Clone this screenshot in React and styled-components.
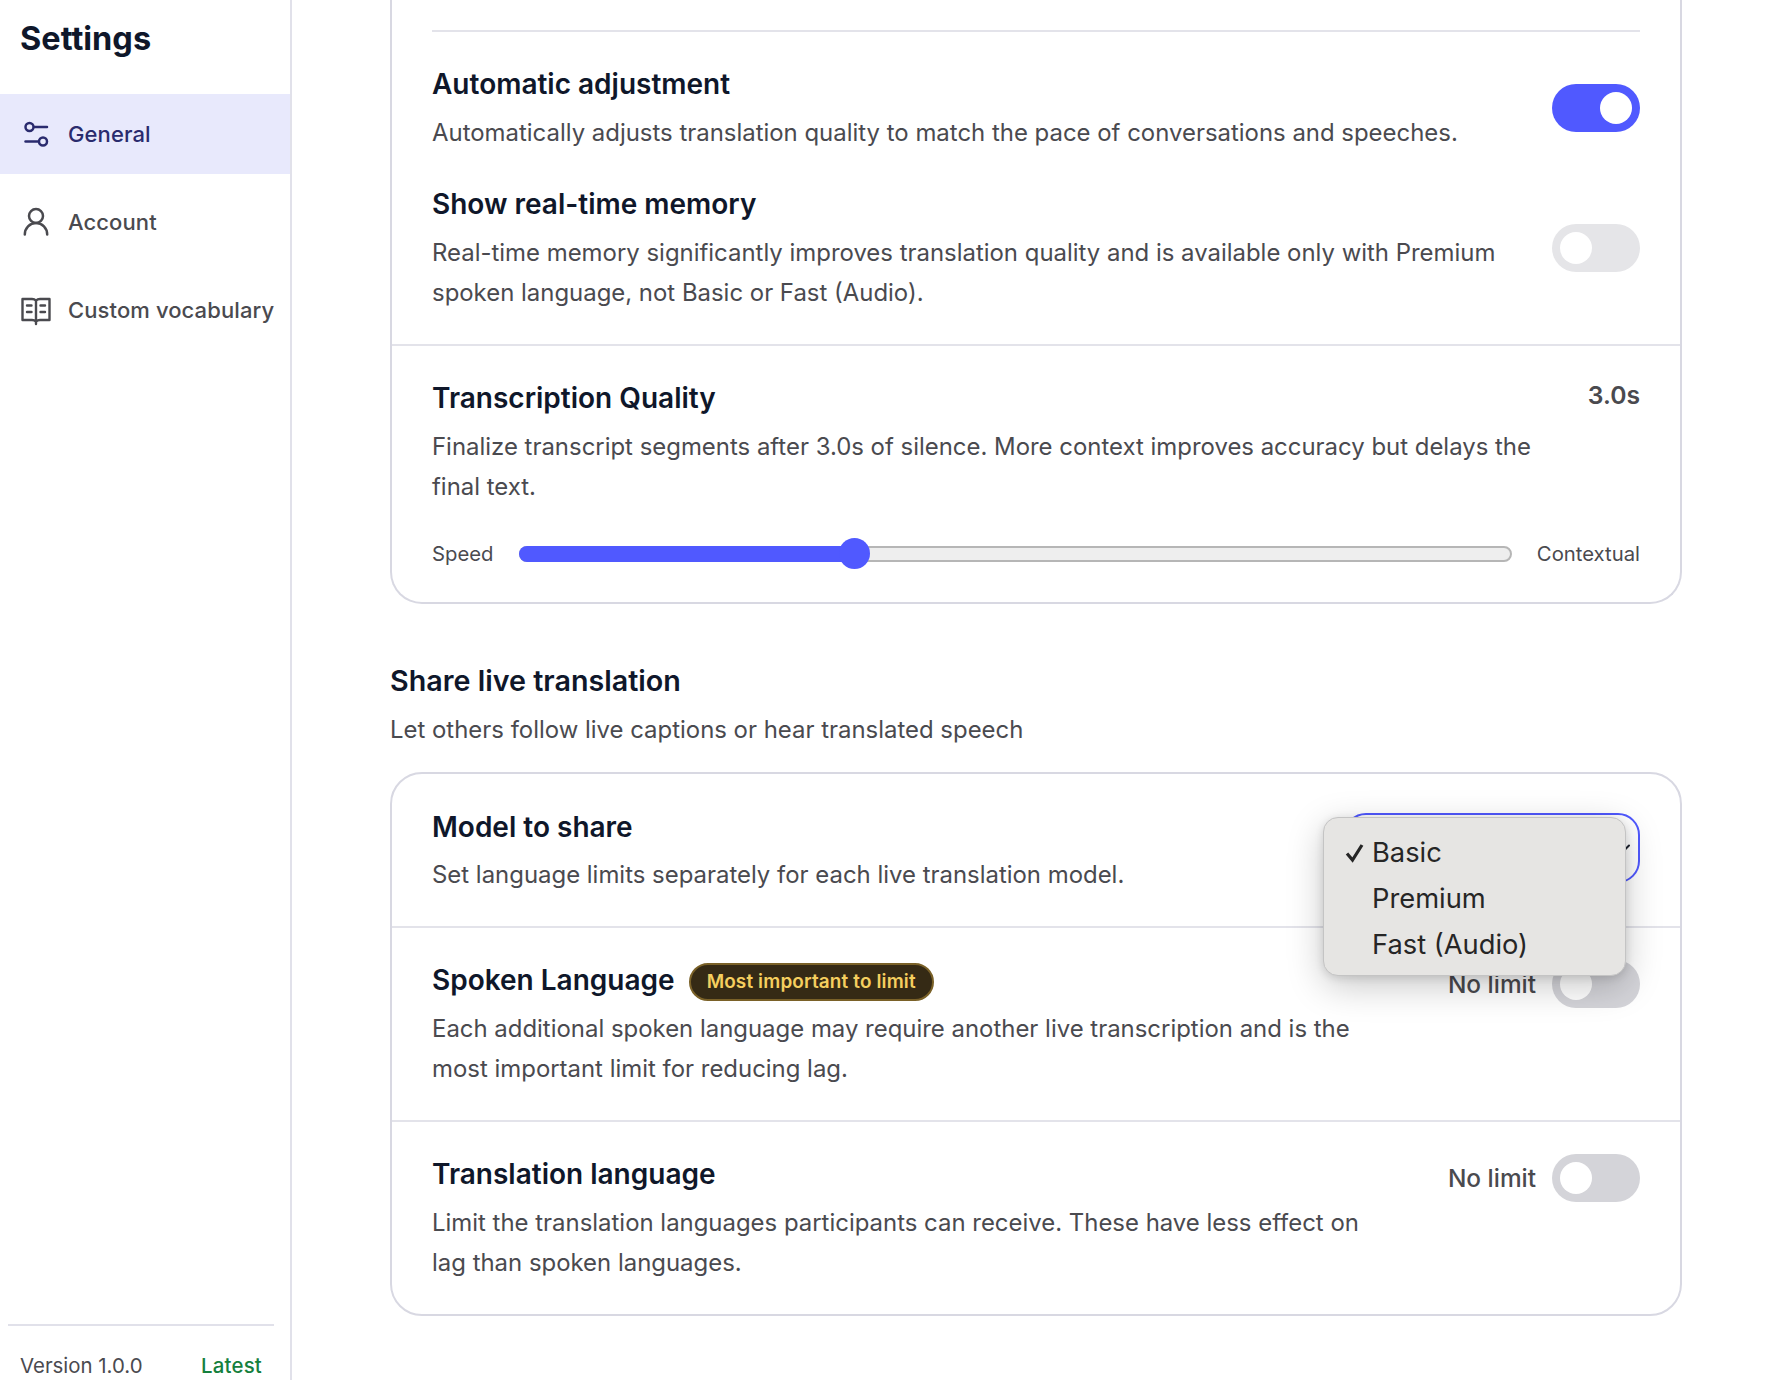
import React from "react";
import styled, { createGlobalStyle } from "styled-components";

const Global = createGlobalStyle`
  html, body { margin: 0; padding: 0; background: #fff; height: 100%; }
  body { font-family: Inter, "Liberation Sans", sans-serif; -webkit-font-smoothing: antialiased; }
`;
const Shell = styled.div`
  display: flex; width: 1778px; height: 1380px; overflow: hidden; background: #fff;
`;
const Sidebar = styled.aside`
  width: 290px; flex: none; border-right: 2px solid #e1e1ea; display: flex; flex-direction: column; height: 1380px; box-sizing: content-box;
`;
const Brand = styled.h1`
  margin: 0; padding: 19px 0 0 20px; height: 94px; box-sizing: border-box; font-size: 32.5px; line-height: 40px; font-weight: 700; color: #0f172a;
`;
const Nav = styled.nav`
  display: flex; flex-direction: column; gap: 8px; flex: 1;
`;
const NavItem = styled.div`
  height: 80px; display: flex; align-items: center; gap: 16px; padding-left: 20px;
  font-size: 22px; font-weight: 500; letter-spacing: 0.1px;
  color: ${p => (p.$active ? "#2a2b6e" : "#4a4a4f")};
  background: ${p => (p.$active ? "#e8e9fc" : "transparent")};
  svg { flex: none; width: 32px; height: 32px; }
`;
const VersionBar = styled.div`
  margin: 0 16px 0 8px; border-top: 2px solid #e1e1ea; height: 56px; box-sizing: border-box; padding: 24px 12px 0; display: flex; justify-content: space-between; align-items: center; font-size: 20.4px; color: #4a4a4f;
`;
const Latest = styled.span`
  color: #15803d; font-weight: 500; letter-spacing: 0.2px;
`;
const Main = styled.main`
  flex: 1; padding: 0 96px 0 98px; min-width: 0;
`;
const Card = styled.section`
  border: 2px solid #d8d8e2; border-radius: 32px; background: #fff;
  ${p => p.$clipped && "border-top: 0; border-top-left-radius: 0; border-top-right-radius: 0; padding-top: 30px;"}
`;
const TopRule = styled.div`
  height: 2px; margin: 0 40px; background: #e3e3ea;
`;
const Group = styled.div`
  padding: ${p => p.$pad || "33px 40px 31px"};
  & + & { border-top: 2px solid #e3e3ea; }
`;
const Row = styled.div`
  display: flex; justify-content: space-between; align-items: flex-start; gap: 32px;
  & + & { margin-top: 32px; }
`;
const Body = styled.div`
  flex: 1; min-width: 0;
`;
const Title = styled.h3`
  margin: 0 0 ${p => p.$after || "10px"}; font-size: 28px; line-height: 38px; font-weight: 600; color: #0f172a; display: flex; align-items: center; gap: 14px;
`;
const Desc = styled.p`
  margin: 0; font-size: 23.93px; line-height: 40px; color: #4a4a4f; max-width: ${p => p.$max || "none"};
`;
const Toggle = styled.div`
  width: 88px; height: 48px; border-radius: 24px; flex: none; padding: 8px; box-sizing: border-box; display: flex;
  justify-content: ${p => (p.$on ? "flex-end" : "flex-start")};
  background: ${p => (p.$on ? "#5059ff" : p.$dim ? "#d4d4d9" : "#e5e5e8")};
  margin-top: ${p => p.$mt || "0"};
  &::after { content: ""; width: 32px; height: 32px; border-radius: 50%; background: #fff; }
`;
const Value = styled.div`
  font-size: 24.7px; line-height: 38px; font-weight: 600; color: #4a4a4f; margin-top: -3px;
`;
const SliderRow = styled.div`
  display: flex; align-items: center; gap: 25px; margin-top: 34px; font-size: 20.3px; color: #4a4a4f;
`;
const Track = styled.div`
  position: relative; flex: 1; height: 16px; border-radius: 8px; background: #eeeeee; box-sizing: border-box; border: 2px solid #b6b6b6;
`;
const Fill = styled.div`
  position: absolute; left: -2px; top: -2px; bottom: -2px; border-radius: 8px 0 0 8px; background: #5059ff;
`;
const Thumb = styled.div`
  position: absolute; top: 50%; width: 31px; height: 31px; margin: -15.5px 0 0 -15.5px; border-radius: 50%; background: #5059ff;
`;
const SliderEnd = styled.div`
  height: 36px;
`;
const SectionHead = styled.div`
  padding: 0 0 22px;
  margin-top: 58px;
`;
const SectionTitle = styled.h2`
  margin: 0 0 10px; font-size: 28.7px; line-height: 38px; font-weight: 600; color: #0f172a;
`;
const Badge = styled.span`
  display: inline-flex; align-items: center; height: 38px; margin: 2px 0 -2px; padding: 0 16px; box-sizing: border-box; border-radius: 19px; border: 2px solid #7a6128; background: #352a15; color: #f5cf5f; font-size: 18.9px; letter-spacing: 0.15px; font-weight: 600;
`;
const Control = styled.div`
  display: flex; align-items: center; gap: 16px; flex: none; margin-top: -1px;
`;
const LimitLabel = styled.span`
  font-size: 24.4px; font-weight: 500; color: #4a4a4f;
`;
const SelectWrap = styled.div`
  position: relative; flex: none; margin-top: 5px;
`;
const Select = styled.div`
  width: 296px; height: 70px; box-sizing: border-box; border: 2px solid #5059ff; border-radius: 22px; display: flex; align-items: center; justify-content: flex-end; padding: 0 6px 0 24px; background: #fff;
`;
const Menu = styled.div`
  position: absolute; left: -21px; top: 4px; width: 303px; height: 159px; box-sizing: border-box; padding: 12px 0; border-radius: 15px; background: #e6e5e3; border: 1px solid #c4c4c4;
  box-shadow: 0 10px 36px rgba(0,0,0,0.22), 0 2px 8px rgba(0,0,0,0.12); z-index: 2;
`;
const MenuItem = styled.div`
  position: relative; height: 46px; line-height: 46px; padding-left: 48px; font-size: 27.3px; color: #262626;
  svg { position: absolute; left: 21px; top: 13px; }
`;

export default function App() {
  return (
    <Shell>
      <Global />
      <Sidebar>
        <Brand>Settings</Brand>
        <Nav>
          <NavItem $active>
            <svg viewBox="0 0 32 32" fill="none" stroke="currentColor" strokeWidth="2.5" strokeLinecap="round">
              <circle cx="9.500" cy="9" r="4" />
              <path d="M14.500 9H27" />
              <path d="M5.500 23.500H18" />
              <circle cx="23" cy="23.500" r="4" />
            </svg>
            General
          </NavItem>
          <NavItem>
            <svg viewBox="0 0 32 32" fill="none" stroke="currentColor" strokeWidth="2.5" strokeLinecap="round">
              <circle cx="16" cy="10" r="7" />
              <path d="M4.800 28.500c0-6.500 5-11.500 11.200-11.500s11.200 5 11.200 11.500" />
            </svg>
            Account
          </NavItem>
          <NavItem>
            <svg viewBox="0 0 32 32" fill="none" stroke="currentColor" strokeWidth="2.400" strokeLinecap="round" strokeLinejoin="round">
              <path d="M16 6.500c-1-1-2-1.500-4-1.500H2.500v21H12c2 0 3 .5 4 1.500 1-1 2-1.500 4-1.500h9.500V5H20c-2 0-3 .5-4 1.500Z" />
              <path d="M16 6.500V30" />
              <path d="M7 11.500h4.500M7 18h4.500M20.500 11.500H25M20.500 18H25" />
            </svg>
            Custom vocabulary
          </NavItem>
        </Nav>
        <VersionBar>
          <span>Version 1.0.0</span>
          <Latest>Latest</Latest>
        </VersionBar>
      </Sidebar>
      <Main>
        <Card $clipped>
          <TopRule />
          <Group>
            <Row>
              <Body>
                <Title>Automatic adjustment</Title>
                <Desc>Automatically adjusts translation quality to match the pace of conversations and speeches.</Desc>
              </Body>
              <Toggle $on $mt="19px" />
            </Row>
            <Row>
              <Body>
                <Title>Show real-time memory</Title>
                <Desc>Real-time memory significantly improves translation quality and is available only with Premium spoken language, not Basic or Fast (Audio).</Desc>
              </Body>
              <Toggle $mt="39px" />
            </Row>
          </Group>
          <Group $pad="33px 40px 0">
            <Row>
              <Body>
                <Title>Transcription Quality</Title>
                <Desc>Finalize transcript segments after 3.0s of silence. More context improves accuracy but delays the final text.</Desc>
              </Body>
              <Value>3.0s</Value>
            </Row>
            <SliderRow>
              <span>Speed</span>
              <Track>
                <Fill style={{ width: "34%" }} />
                <Thumb style={{ left: "33.8%" }} />
              </Track>
              <span>Contextual</span>
            </SliderRow>
            <SliderEnd />
          </Group>
        </Card>

        <SectionHead>
          <SectionTitle>Share live translation</SectionTitle>
          <Desc>Let others follow live captions or hear translated speech</Desc>
        </SectionHead>

        <Card>
          <Group $pad="34px 40px 31px">
            <Row>
              <Body>
                <Title $after="9px">Model to share</Title>
                <Desc>Set language limits separately for each live translation model.</Desc>
              </Body>
              <SelectWrap>
                <Select>
                  <svg width="16" height="16" viewBox="0 0 16 16" fill="none" stroke="#1f2430" strokeWidth="2" strokeLinecap="round"><path d="M3 5.500l5 5 5-5" /></svg>
                </Select>
                <Menu>
                  <MenuItem>
                    <svg width="20" height="20" viewBox="0 0 20 20" fill="none" stroke="#262626" strokeWidth="3.200" strokeLinejoin="miter"><path d="M2 10.500l5.500 6.500L17 2" /></svg>
                    Basic
                  </MenuItem>
                  <MenuItem>Premium</MenuItem>
                  <MenuItem>Fast (Audio)</MenuItem>
                </Menu>
              </SelectWrap>
            </Row>
          </Group>
          <Group>
            <Row>
              <Body>
                <Title>Spoken Language<Badge>Most important to limit</Badge></Title>
                <Desc $max="940px">Each additional spoken language may require another live transcription and is the most important limit for reducing lag.</Desc>
              </Body>
              <Control><LimitLabel>No limit</LimitLabel><Toggle $dim /></Control>
            </Row>
          </Group>
          <Group>
            <Row>
              <Body>
                <Title>Translation language</Title>
                <Desc $max="940px">Limit the translation languages participants can receive. These have less effect on lag than spoken languages.</Desc>
              </Body>
              <Control><LimitLabel>No limit</LimitLabel><Toggle $dim /></Control>
            </Row>
          </Group>
        </Card>
      </Main>
    </Shell>
  );
}
